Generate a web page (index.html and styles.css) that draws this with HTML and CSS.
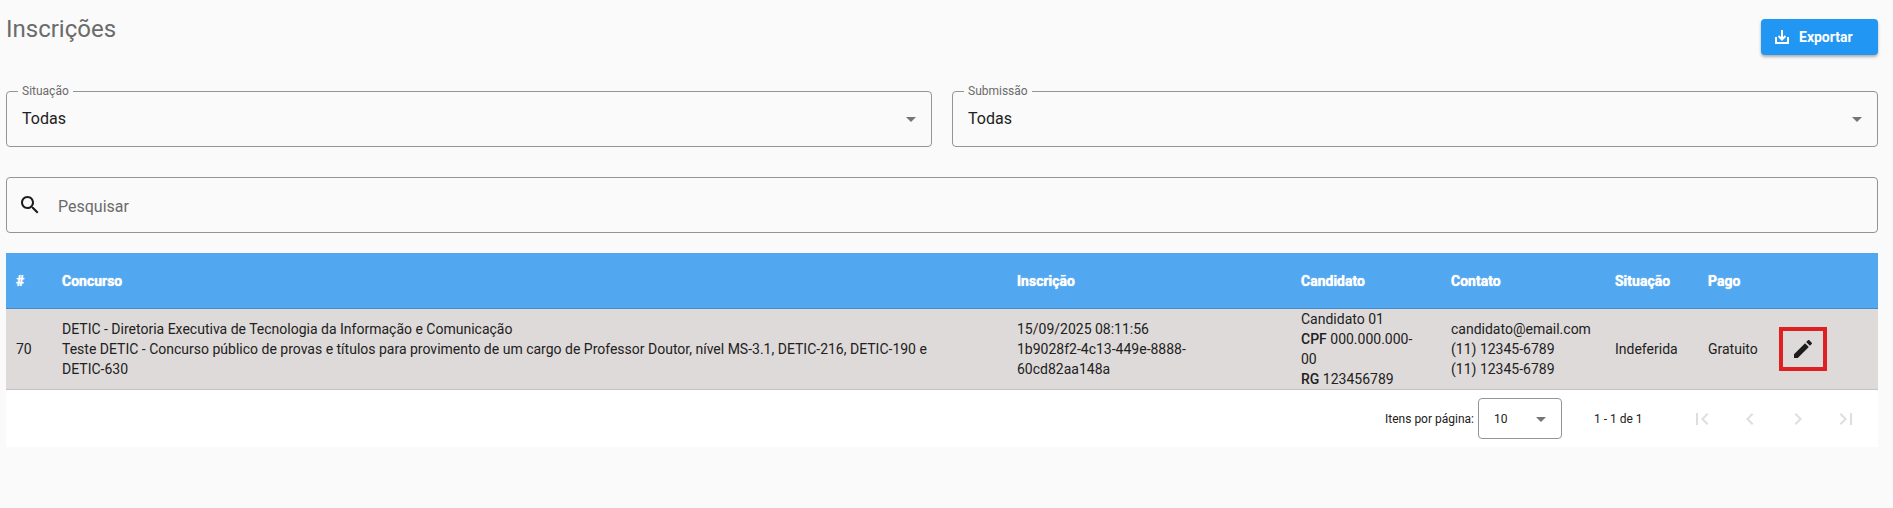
FILE: index.html
```html
<!DOCTYPE html>
<html lang="pt-BR">
<head>
<meta charset="utf-8">
<meta name="viewport" content="width=device-width, initial-scale=1">
<title>Inscrições</title>
<link rel="stylesheet" href="styles.css">
</head>
<body>
<main class="page">
  <header class="page-header">
    <h1 class="page-title">Inscrições</h1>
    <button type="button" class="export-button">
      <svg class="export-icon" viewBox="0 0 14 14" aria-hidden="true"><path d="M1 7v6h12V7M7 0v9M3.500 6L7 9.500 10.500 6" fill="none" stroke="currentColor" stroke-width="2"/></svg>
      <span>Exportar</span>
    </button>
  </header>

  <div class="filters">
    <div class="field">
      <label class="field-label" for="situacao">Situação</label>
      <select class="field-select" id="situacao"><option>Todas</option></select>
      <svg class="field-arrow" viewBox="0 0 10 5" aria-hidden="true"><path d="M0 0h10L5 5z"/></svg>
    </div>
    <div class="field">
      <label class="field-label" for="submissao">Submissão</label>
      <select class="field-select" id="submissao"><option>Todas</option></select>
      <svg class="field-arrow" viewBox="0 0 10 5" aria-hidden="true"><path d="M0 0h10L5 5z"/></svg>
    </div>
  </div>

  <div class="search">
    <label class="search-label" for="pesquisar" aria-label="Pesquisar">
      <svg class="icon" viewBox="0 0 24 24" aria-hidden="true"><path d="M15.500 14h-.79l-.28-.27C15.410 12.590 16 11.110 16 9.500 16 5.910 13.090 3 9.500 3S3 5.910 3 9.500 5.910 16 9.500 16c1.610 0 3.090-.59 4.230-1.570l.27.28v.79l5 4.990L20.490 19l-4.990-5zm-6 0C7.010 14 5 11.990 5 9.500S7.010 5 9.500 5 14 7.010 14 9.500 11.990 14 9.500 14z"/></svg>
    </label>
    <input class="search-input" id="pesquisar" type="text" placeholder="Pesquisar">
  </div>

  <section class="results">
    <table class="table">
      <colgroup>
        <col class="col-id"><col><col class="col-inscricao"><col class="col-candidato"><col class="col-contato"><col class="col-situacao"><col class="col-pago"><col class="col-acoes">
      </colgroup>
      <thead>
        <tr><th>#</th><th>Concurso</th><th>Inscrição</th><th>Candidato</th><th>Contato</th><th>Situação</th><th>Pago</th><th></th></tr>
      </thead>
      <tbody>
        <tr>
          <td>70</td>
          <td class="wrap">DETIC - Diretoria Executiva de Tecnologia da Informação e Comunicação<br>Teste DETIC - Concurso público de provas e títulos para provimento de um cargo de Professor Doutor, nível MS-3.1, DETIC-216, DETIC-190 e <span class="code">DETIC-630</span></td>
          <td class="wrap">15/09/2025 08:11:56<br>1b9028f2-4c13-449e-8888-60cd82aa148a</td>
          <td class="wrap">Candidato 01<br><b>CPF</b> 000.000.000-<wbr>00<br><b>RG</b> 123456789</td>
          <td>candidato@email.com<br>(11) 12345-6789<br>(11) 12345-6789</td>
          <td>Indeferida</td>
          <td>Gratuito</td>
          <td>
            <button type="button" class="edit-button" aria-label="Editar">
              <svg class="icon" viewBox="0 0 24 24" aria-hidden="true"><path d="M3 17.250V21h3.750L17.810 9.940l-3.750-3.750L3 17.250zM20.710 7.040c.39-.39.39-1.020 0-1.410l-2.340-2.340c-.39-.39-1.020-.39-1.410 0l-1.830 1.830 3.750 3.750 1.830-1.830z"/></svg>
            </button>
          </td>
        </tr>
      </tbody>
    </table>

    <nav class="paginator" aria-label="Paginação">
      <label for="itens">Itens por página:</label>
      <div class="page-size">
        <select class="page-size-select" id="itens"><option>10</option></select>
        <svg class="page-size-arrow" viewBox="0 0 10 5" aria-hidden="true"><path d="M0 0h10L5 5z"/></svg>
      </div>
      <span class="range">1 - 1 de 1</span>
      <button type="button" class="page-button" disabled aria-label="Primeira página"><svg class="page-icon" viewBox="0 0 24 24"><path d="M18.410 16.590L13.820 12l4.590-4.590L17 6l-6 6 6 6zM6 6h2v12H6z"/></svg></button>
      <button type="button" class="page-button" disabled aria-label="Página anterior"><svg class="page-icon" viewBox="0 0 24 24"><path d="M15.410 7.410L14 6l-6 6 6 6 1.410-1.410L10.830 12z"/></svg></button>
      <button type="button" class="page-button" disabled aria-label="Próxima página"><svg class="page-icon" viewBox="0 0 24 24"><path d="M10 6L8.590 7.410 13.170 12l-4.580 4.590L10 18l6-6z"/></svg></button>
      <button type="button" class="page-button" disabled aria-label="Última página"><svg class="page-icon" viewBox="0 0 24 24"><path d="M5.590 7.410L10.180 12l-4.590 4.590L7 18l6-6-6-6zM16 6h2v12h-2z"/></svg></button>
    </nav>
  </section>
</main>
</body>
</html>
```
FILE: styles.css
```css
*,
*::before,
*::after {
  box-sizing: border-box;
}

body {
  margin: 0;
  background: #fafafa;
  color: #212121;
  font-family: Roboto, "Liberation Sans", sans-serif;
  font-size: 14px;
  line-height: 20px;
}

button,
select,
input {
  font: inherit;
  color: inherit;
}

.page {
  padding: 13px 15px 13px 6px;
}

.page-header {
  display: flex;
  justify-content: space-between;
  align-items: flex-start;
  margin-bottom: 36px;
}

.page-title {
  margin: 0;
  color: #6b6b6b;
  font-size: 24px;
  font-weight: 400;
  line-height: 32px;
}

.export-button {
  display: flex;
  align-items: center;
  gap: 10px;
  min-width: 117px;
  height: 36px;
  margin-top: 6px;
  padding: 0 14px;
  border: 0;
  border-radius: 4px;
  background: #2196f3;
  box-shadow: 0 2px 3px rgba(0, 0, 0, 0.3);
  color: #fff;
  font-weight: 700;
}

.export-icon {
  width: 14px;
  height: 14px;
}

.filters {
  display: grid;
  grid-template-columns: 1fr 1fr;
  gap: 20px;
  margin-bottom: 30px;
}

.field {
  position: relative;
}

.field-label {
  position: absolute;
  top: -8px;
  left: 12px;
  padding: 0 4px;
  background: #fafafa;
  color: #6b6b6b;
  font-size: 12px;
  line-height: 16px;
}

.field-select {
  display: block;
  width: 100%;
  height: 56px;
  padding: 0 40px 0 15px;
  appearance: none;
  border: 1px solid #949494;
  border-radius: 4px;
  background: transparent;
  font-size: 16px;
}

.field-arrow {
  position: absolute;
  top: 26px;
  right: 16px;
  width: 10px;
  height: 5px;
  fill: #757575;
  pointer-events: none;
}

.search {
  display: flex;
  align-items: center;
  height: 56px;
  margin-bottom: 20px;
  border: 1px solid #949494;
  border-radius: 4px;
}

.search-label {
  display: flex;
  padding: 0 16px 0 11px;
}

.icon {
  display: block;
  width: 24px;
  height: 24px;
  fill: #1c1c1c;
}

.search-input {
  flex: 1;
  min-width: 0;
  height: 100%;
  padding: 2px 0 0;
  border: 0;
  outline: 0;
  background: transparent;
  font-size: 16px;
}

.search-input::placeholder {
  color: #6b6b6b;
  opacity: 1;
}

.results {
  background: #fff;
}

.table {
  width: 100%;
  table-layout: fixed;
  border-collapse: separate;
  border-spacing: 0;
}

.col-id { width: 46px; }
.col-inscricao { width: 284px; }
.col-candidato { width: 150px; }
.col-contato { width: 164px; }
.col-situacao { width: 93px; }
.col-pago { width: 71px; }
.col-acoes { width: 109px; }

.table th {
  height: 56px;
  padding: 0 10px;
  border-bottom: 1px solid #4b8ac2;
  background: #52a8f0;
  color: #fff;
  font-weight: 700;
  text-align: left;
  text-shadow: 0 0 1px #fff;
}

.table td {
  padding: 0 10px;
  border-bottom: 1px solid #c4c2c2;
  background: #dedad9;
}

.table td.wrap {
  padding-right: 20px;
}

.code {
  white-space: nowrap;
}

.table b {
  font-weight: 500;
}

.edit-button {
  display: flex;
  align-items: center;
  justify-content: center;
  width: 48px;
  height: 44px;
  padding: 0;
  border: 4px solid #e02020;
  background: transparent;
}

.paginator {
  display: flex;
  align-items: center;
  justify-content: flex-end;
  height: 57px;
  padding-right: 8px;
  font-size: 12px;
}

.page-size {
  position: relative;
  margin: 0 32px 0 4px;
}

.page-size-select {
  display: block;
  width: 84px;
  height: 41px;
  padding: 0 32px 0 15px;
  appearance: none;
  border: 1px solid #949494;
  border-radius: 4px;
  background: transparent;
}

.page-size-arrow {
  position: absolute;
  top: 19px;
  right: 16px;
  width: 10px;
  height: 5px;
  fill: #757575;
  pointer-events: none;
}

.range {
  min-width: 84px;
}

.page-button {
  display: flex;
  align-items: center;
  justify-content: center;
  width: 48px;
  height: 48px;
  padding: 0;
  border: 0;
  background: transparent;
}

.page-icon {
  width: 24px;
  height: 24px;
  fill: #dedede;
}
```
